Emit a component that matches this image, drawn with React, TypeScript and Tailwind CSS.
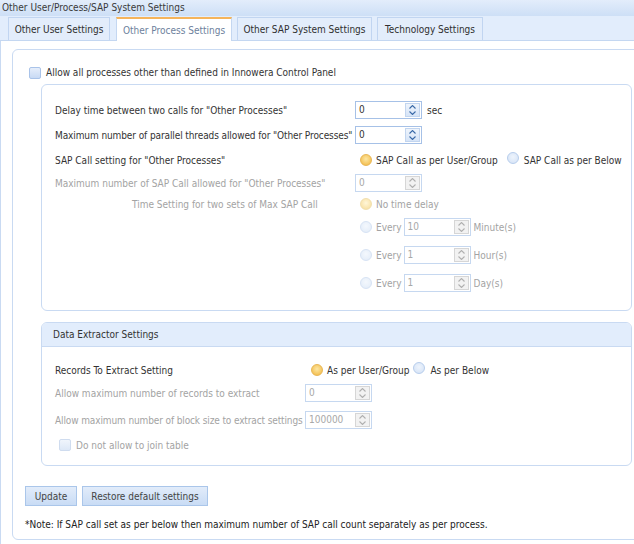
import React from "react";

function Spin({ value, disabled }: { value: string; disabled?: boolean }) {
  return (
    <div
      className={`flex h-[18px] w-[67px] border bg-white ${
        disabled ? "border-[#c6d8f0] text-[#a8a8a8]" : "border-[#a6c1e7] text-[#333]"
      }`}
    >
      <div className="flex-1 pl-[3px] leading-[16px]">{value}</div>
      <div
        className={`m-[1px] flex w-[15px] flex-col items-center justify-center border ${
          disabled
            ? "border-[#d6d6d6] bg-[#f2f2f2] text-[#b0b0b0]"
            : "border-[#c2d5ef] bg-gradient-to-b from-[#eef4fc] to-[#d6e4f7] text-[#3b6aa8]"
        }`}
      >
        <svg width="7" height="4" viewBox="0 0 7 4" className="mb-[2px]">
          <path d="M0.5 3.5L3.5 0.5L6.5 3.5" fill="none" stroke="currentColor" strokeWidth="1.1" />
        </svg>
        <svg width="7" height="4" viewBox="0 0 7 4">
          <path d="M0.5 0.5L3.5 3.5L6.5 0.5" fill="none" stroke="currentColor" strokeWidth="1.1" />
        </svg>
      </div>
    </div>
  );
}

function Radio({ on, disabled }: { on?: boolean; disabled?: boolean }) {
  const cls = on
    ? disabled
      ? "border-[#f1dfae] bg-[radial-gradient(circle_at_50%_40%,#fff6d9,#f6dc98)]"
      : "border-[#e8b654] bg-[radial-gradient(circle_at_50%_40%,#fde7a3,#f1b53c)]"
    : disabled
    ? "border-[#d7e3f4] bg-[radial-gradient(circle_at_50%_40%,#f4f8fd,#e1ebf8)]"
    : "border-[#b7cdec] bg-[radial-gradient(circle_at_50%_40%,#eef4fc,#d2e1f6)]";
  return <span className={`inline-block h-[12px] w-[12px] shrink-0 rounded-full border ${cls}`} />;
}

function Check({ disabled }: { disabled?: boolean }) {
  return (
    <span
      className={`inline-block h-[12px] w-[12px] shrink-0 rounded-[2px] border ${
        disabled
          ? "border-[#cfdcef] bg-gradient-to-b from-[#f0f5fc] to-[#dde8f7]"
          : "border-[#a9c3e9] bg-gradient-to-b from-[#e6eefb] to-[#c8daf4]"
      }`}
    />
  );
}

const tabs = [
  { label: "Other User Settings", cls: "ml-[8px] w-[102px]" },
  { label: "Other Process Settings", cls: "ml-[6px] w-[116px]" },
  { label: "Other SAP System Settings", cls: "ml-[5px] w-[135px]" },
  { label: "Technology Settings", cls: "ml-[5px] w-[106px]" },
];

export default function App() {
  return (
    <div className="h-[544px] w-[634px] overflow-hidden bg-white font-['DejaVu_Sans_Condensed','DejaVu_Sans',sans-serif] text-[10px] text-[#333]">
      <div className="h-[16px] bg-gradient-to-b from-[#e3edfb] to-[#cddff6] pl-[2px] leading-[15px] text-[#3a3a3a]">
        Other User/Process/SAP System Settings
      </div>
      <div className="flex h-[25px] items-end border-b border-[#c4d7f1] bg-[#e2edfc]">
        {tabs.map((t, i) =>
          i === 1 ? (
            <div
              key={t.label}
              className={`${t.cls} -mb-[1px] flex h-[24px] items-center justify-center border-x border-t-2 border-[#c4d7f1] border-t-[#f5b45b] bg-white text-[#6d7f9c]`}
            >
              {t.label}
            </div>
          ) : (
            <div
              key={t.label}
              className={`${t.cls} flex h-[23px] items-center justify-center border-x border-t border-[#c1d5f1] bg-[#e3edfb] text-[#2f2f2f]`}
            >
              {t.label}
            </div>
          )
        )}
      </div>
      <div className="h-[503px] border-l border-[#c9daf2] pl-[11px] pt-[8px]">
        <div className="h-[491px] w-[640px] rounded-[6px] border border-[#c9daf2] pl-[16px] pt-[15px]">
          <div className="flex items-center gap-[5px]">
            <Check />
            <span>Allow all processes other than defined in Innowera Control Panel</span>
          </div>

          <div className="ml-[12px] mt-[4px] h-[227px] w-[591px] rounded-[6px] border border-[#c9daf2] pl-[13px] pt-[16px]">
            <div className="flex h-[18px] items-center">
              <div className="w-[300px]">Delay time between two calls for "Other Processes"</div>
              <Spin value="0" />
              <span className="ml-[5px]">sec</span>
            </div>
            <div className="mt-[7px] flex h-[18px] items-center">
              <div className="w-[300px] whitespace-nowrap tracking-[-0.1px]">
                Maximum number of parallel threads allowed for "Other Processes"
              </div>
              <Spin value="0" />
            </div>
            <div className="mt-[7px] flex h-[18px] items-center">
              <div className="w-[300px]">SAP Call setting for "Other Processes"</div>
              <div className="ml-[5px] flex items-center">
                <Radio on />
                <span className="ml-[4px]">SAP Call as per User/Group</span>
                <span className="ml-[9px]">
                  <Radio />
                </span>
                <span className="ml-[5px]">SAP Call as per Below</span>
              </div>
            </div>
            <div className="mt-[5px] flex h-[18px] items-center text-[#a3a3a3]">
              <div className="w-[300px]">Maximum number of SAP Call allowed for "Other Processes"</div>
              <Spin value="0" disabled />
            </div>
            <div className="mt-[3px] flex h-[18px] items-center text-[#a3a3a3]">
              <div className="w-[300px] pl-[77px]">Time Setting for two sets of Max SAP Call</div>
              <div className="ml-[5px] flex items-center gap-[4px]">
                <Radio on disabled />
                <span>No time delay</span>
              </div>
            </div>
            {[
              ["10", "Minute(s)", "mt-[5px]"],
              ["1", "Hour(s)", "mt-[10px]"],
              ["1", "Day(s)", "mt-[10px]"],
            ].map(([v, u, m]) => (
              <div key={u} className={`${m} flex h-[18px] items-center text-[#a3a3a3]`}>
                <div className="w-[300px]" />
                <div className="ml-[5px] flex items-center">
                  <Radio disabled />
                  <span className="ml-[4px] mr-[2px]">Every</span>
                  <Spin value={v} disabled />
                  <span className="ml-[3px]">{u}</span>
                </div>
              </div>
            ))}
          </div>

          <div className="ml-[12px] mt-[11px] h-[144px] w-[591px] overflow-hidden rounded-[6px] border border-[#c9daf2]">
            <div className="flex h-[24px] items-center border-b border-[#c9daf2] bg-[#e2edfc] pl-[11px]">
              Data Extractor Settings
            </div>
            <div className="pl-[13px] pt-[14px]">
              <div className="flex h-[18px] items-center">
                <div className="w-[250px]">Records To Extract Setting</div>
                <div className="ml-[6px] flex items-center">
                  <Radio on />
                  <span className="ml-[4px]">As per User/Group</span>
                  <span className="ml-[4px]">
                    <Radio />
                  </span>
                  <span className="ml-[5px]">As per Below</span>
                </div>
              </div>
              <div className="mt-[5px] flex h-[18px] items-center text-[#a3a3a3]">
                <div className="w-[250px]">Allow maximum number of records to extract</div>
                <Spin value="0" disabled />
              </div>
              <div className="mt-[9px] flex h-[18px] items-center text-[#a3a3a3]">
                <div className="w-[250px] whitespace-nowrap tracking-[-0.12px]">
                  Allow maximum number of block size to extract settings
                </div>
                <Spin value="100000" disabled />
              </div>
              <div className="ml-[4px] mt-[7px] flex h-[18px] items-center gap-[5px] text-[#a3a3a3]">
                <Check disabled />
                <span>Do not allow to join table</span>
              </div>
            </div>
          </div>

          <div className="-ml-[4px] mt-[20px] flex gap-[5px] text-[#444]">
            <div className="flex h-[20px] w-[52px] items-center justify-center border border-[#aac6ea] bg-gradient-to-b from-[#e2ecfa] to-[#c9dcf5]">
              Update
            </div>
            <div className="flex h-[20px] w-[126px] items-center justify-center border border-[#aac6ea] bg-gradient-to-b from-[#e2ecfa] to-[#c9dcf5]">
              Restore default settings
            </div>
          </div>
          <div className="-ml-[4px] mt-[11px] text-[#222]">
            *Note: If SAP call set as per below then maximum number of SAP call count separately as per process.
          </div>
        </div>
      </div>
    </div>
  );
}
